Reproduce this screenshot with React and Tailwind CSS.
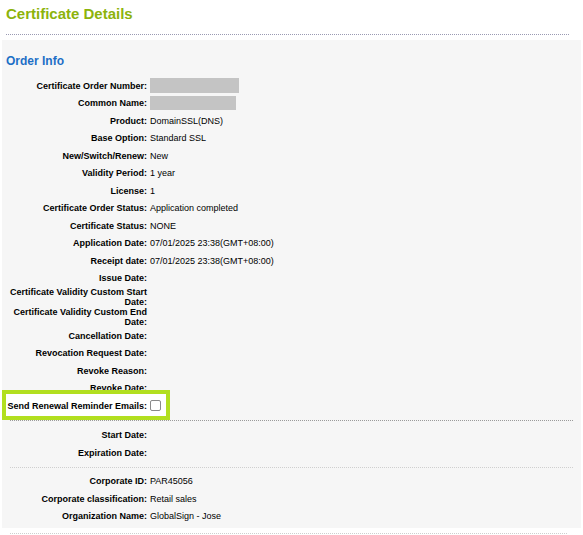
import React from "react";

const orderRows = [
  { label: "Certificate Order Number:", box: "w-[89px] h-[15px]" },
  { label: "Common Name:", box: "w-[86px] h-[14px]" },
  { label: "Product:", value: "DomainSSL(DNS)" },
  { label: "Base Option:", value: "Standard SSL" },
  { label: "New/Switch/Renew:", value: "New" },
  { label: "Validity Period:", value: "1 year" },
  { label: "License:", value: "1" },
  { label: "Certificate Order Status:", value: "Application completed" },
  { label: "Certificate Status:", value: "NONE" },
  { label: "Application Date:", value: "07/01/2025 23:38(GMT+08:00)" },
  { label: "Receipt date:", value: "07/01/2025 23:38(GMT+08:00)" },
  { label: "Issue Date:" },
  { label: "Certificate Validity Custom Start Date:" },
  { label: "Certificate Validity Custom End Date:" },
  { label: "Cancellation Date:" },
  { label: "Revocation Request Date:" },
  { label: "Revoke Reason:" },
  { label: "Revoke Date:" },
];

const dateRows = [{ label: "Start Date:" }, { label: "Expiration Date:" }];

const corpRows = [
  { label: "Corporate ID:", value: "PAR45056" },
  { label: "Corporate classification:", value: "Retail sales" },
  { label: "Organization Name:", value: "GlobalSign - Jose" },
];

function Row({ label, value, box, children }) {
  return (
    <div className="flex items-center min-h-[17.5px]">
      <div className="w-[141px] shrink-0 text-right font-bold leading-[10px]">{label}</div>
      <div className="ml-[3px] leading-[10px] flex items-center">
        {box ? <span className={`block bg-[#c4c4c4] ${box}`}></span> : value}
        {children}
      </div>
    </div>
  );
}

export default function App() {
  return (
    <div
      className="w-[583px] h-[535px] bg-white text-black text-[9px] overflow-hidden"
      style={{ fontFamily: '"Liberation Sans", Arial, sans-serif' }}
    >
      {/* Title */}
      <h1 className="pt-[5px] ml-[6px] text-[15px] leading-[17px] font-bold text-[#8cb30b]">
        Certificate Details
      </h1>
      <div className="mt-[12px] ml-[6px] w-[563px] border-t border-dotted border-[#9a9ab2]"></div>

      {/* Panel */}
      <div className="mt-[5px] mx-[2px] bg-[#f6f6f6] pt-[14px] pb-[3px]">
        <h2 className="ml-[4px] text-[12px] leading-[14px] font-bold text-[#1d6fc6]">Order Info</h2>

        <div className="mt-[9px] px-[4px]">
          {orderRows.map((r) => (
            <Row key={r.label} {...r} />
          ))}

          {/* highlighted reminder row */}
          <div className="relative">
            <div className="absolute left-[-4px] top-[-7px] w-[168px] h-[30px] border-[4px] border-[#b2df1f] bg-white z-10"></div>
            <div className="relative z-20">
              <Row label="Send Renewal Reminder Emails:">
                <span className="block w-[11px] h-[11px] rounded-[2px] border border-[#8a8a8a] bg-white"></span>
              </Row>
            </div>
          </div>
        </div>

        <div className="mt-[5px] mx-[8px] border-t border-dotted border-[#9a9a9a]"></div>

        <div className="mt-[6px] px-[4px]">
          {dateRows.map((r) => (
            <Row key={r.label} {...r} />
          ))}
        </div>

        <div className="mt-[5px] mx-[8px] border-t border-dotted border-[#cfcfcf]"></div>

        <div className="mt-[5px] px-[4px]">
          {corpRows.map((r) => (
            <Row key={r.label} {...r} />
          ))}
        </div>
      </div>

      <div className="mt-[5px] ml-[10px] w-[557px] border-t border-dotted border-[#cfcfcf]"></div>
    </div>
  );
}
